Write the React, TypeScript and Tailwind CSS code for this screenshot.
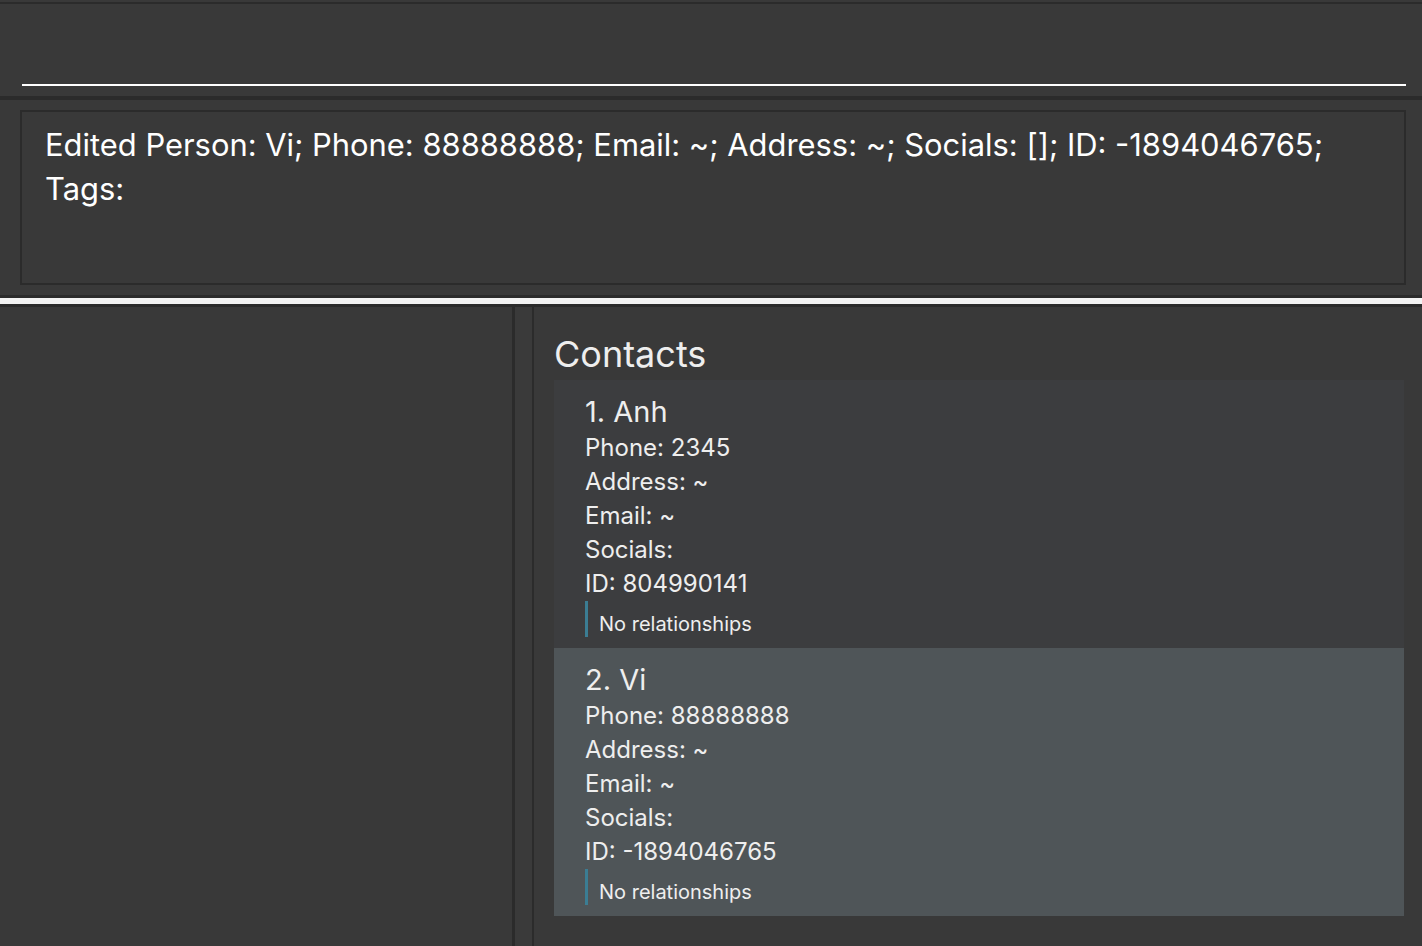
import React from "react";

type Contact = {
  idx: number;
  name: string;
  phone: string;
  id: string;
  selected?: boolean;
};

const contacts: Contact[] = [
  { idx: 1, name: "Anh", phone: "2345", id: "804990141" },
  { idx: 2, name: "Vi", phone: "88888888", id: "-1894046765", selected: true },
];

function Card({ c }: { c: Contact }) {
  return (
    <div
      className={`${c.selected ? "bg-[#4f5558]" : "bg-[#3c3d3f]"} pl-[31px] pt-[14px] pb-[11px] text-[#eeeeee]`}
    >
      <div className="text-[29px] leading-[35px] pb-[2px]">
        {c.idx}. {c.name}
      </div>
      <div className="text-[24px] leading-[34px]">Phone: {c.phone}</div>
      <div className="text-[24px] leading-[34px]">Address: ~</div>
      <div className="text-[24px] leading-[34px]">Email: ~</div>
      <div className="text-[24px] leading-[34px]">Socials:</div>
      <div className="text-[24px] leading-[34px]">ID: {c.id}</div>
      <div className="flex h-[36px]">
        <div className="h-[36px] w-[3px] bg-[#3b7d93]" />
        <div className="pl-[11px] pt-[9px] text-[20px] leading-[28px] text-[#eeeeee]">
          No relationships
        </div>
      </div>
    </div>
  );
}

export default function App() {
  return (
    <div
      className="flex h-[946px] w-[1422px] flex-col overflow-hidden bg-[#393939] text-white"
      style={{ fontFamily: "Inter, 'Noto Sans', sans-serif" }}
    >
      <div className="h-[2px]" />
      <div className="h-[2px] bg-[#2b2b2b]" />
      <div className="h-[92px] pl-[22px] pr-[16px] pt-[80px]">
        <div className="h-[2px] bg-white" />
      </div>
      <div className="h-[4px] bg-[#2b2b2b]" />
      <div className="pb-[10px] pl-[20px] pr-[16px] pt-[10px]">
        <div className="h-[175px] border-2 border-[#2b2b2b] pl-[23px] pr-[20px] pt-[11px] text-[30.9px] leading-[44px] text-white">
          Edited Person: Vi; Phone: 88888888; Email: ~; Address: ~; Socials: []; ID: -1894046765;
          <br />
          Tags:
        </div>
      </div>
      <div className="h-[3px] bg-[#2b2b2b]" />
      <div className="h-[6px] bg-[#f3f3f3]" />
      <div className="h-[3px] bg-[#2b2b2b]" />
      <div className="flex flex-1 flex-row">
        <div className="w-[512px]" />
        <div className="w-[3px] bg-[#2b2b2b]" />
        <div className="w-[17px] bg-[#3a3a3a]" />
        <div className="w-[2px] bg-[#2b2b2b]" />
        <div className="flex flex-1 flex-col pl-[20px] pr-[18px]">
          <div className="pb-[5px] pt-[26px] text-[36px] leading-[42px] text-[#eeeeee]">
            Contacts
          </div>
          <div className="flex flex-col">
            {contacts.map((c) => (
              <Card key={c.idx} c={c} />
            ))}
          </div>
        </div>
      </div>
    </div>
  );
}
